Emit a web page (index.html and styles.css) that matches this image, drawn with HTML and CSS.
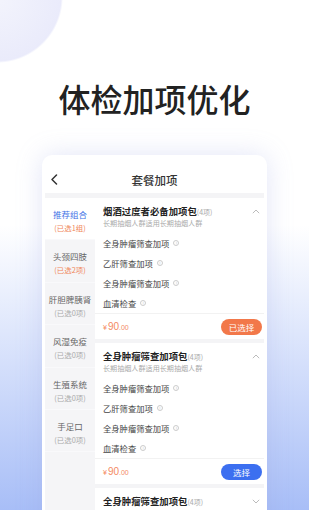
FILE: index.html
```html
<!DOCTYPE html>
<html lang="zh-CN">
<head>
<meta charset="utf-8">
<link rel="stylesheet" href="styles.css">
</head>
<body>
<div class="page">
  <h1 class="headline">体检加项优化</h1>
  <div class="card">
    <div class="topbar">
      <svg class="back" width="8" height="11" viewBox="0 0 8 11"><path d="M6.5 1 L2 5.5 L6.5 10" fill="none" stroke="#333" stroke-width="1.5" stroke-linecap="round" stroke-linejoin="round"/></svg>
      <div class="topbar-title">套餐加项</div>
    </div>
    <div class="band"></div>
    <div class="main">
      <div class="side">
        <div class="side-item active"><div class="side-name">推荐组合</div><div class="side-sub hot">(已选1组)</div></div>
        <div class="side-item"><div class="side-name">头颈四肢</div><div class="side-sub hot">(已选2项)</div></div>
        <div class="side-item"><div class="side-name">肝胆脾胰肾</div><div class="side-sub">(已选0项)</div></div>
        <div class="side-item"><div class="side-name">风湿免疫</div><div class="side-sub">(已选0项)</div></div>
        <div class="side-item"><div class="side-name">生殖系统</div><div class="side-sub">(已选0项)</div></div>
        <div class="side-item"><div class="side-name">手足口</div><div class="side-sub">(已选0项)</div></div>
      </div>
      <div class="content">
        <div class="pkg">
          <div class="pkg-head">
            <div class="pkg-title">烟酒过度者必备加项包<span class="pkg-count">(4项)</span></div>
            <svg class="chev" width="8" height="5" viewBox="0 0 8 5"><path d="M0.8 4.2 L4 1 L7.2 4.2" fill="none" stroke="#bbb" stroke-width="1"/></svg>
          </div>
          <div class="pkg-desc">长期抽烟人群适用长期抽烟人群</div>
          <ul class="items">
            <li>全身肿瘤筛查加项<span class="info">!</span></li>
            <li>乙肝筛查加项<span class="info">!</span></li>
            <li>全身肿瘤筛查加项<span class="info">!</span></li>
            <li>血清检查<span class="info">!</span></li>
          </ul>
          <div class="pkg-foot">
            <div class="price"><span class="cur">¥</span>90<span class="dec">.00</span></div>
            <div class="btn btn-selected">已选择</div>
          </div>
        </div>
        <div class="gap"></div>
        <div class="pkg">
          <div class="pkg-head">
            <div class="pkg-title">全身肿瘤筛查加项包<span class="pkg-count">(4项)</span></div>
            <svg class="chev" width="8" height="5" viewBox="0 0 8 5"><path d="M0.8 4.2 L4 1 L7.2 4.2" fill="none" stroke="#bbb" stroke-width="1"/></svg>
          </div>
          <div class="pkg-desc">长期抽烟人群适用长期抽烟人群</div>
          <ul class="items">
            <li>全身肿瘤筛查加项<span class="info">!</span></li>
            <li>乙肝筛查加项<span class="info">!</span></li>
            <li>全身肿瘤筛查加项<span class="info">!</span></li>
            <li>血清检查<span class="info">!</span></li>
          </ul>
          <div class="pkg-foot">
            <div class="price"><span class="cur">¥</span>90<span class="dec">.00</span></div>
            <div class="btn btn-select">选择</div>
          </div>
        </div>
        <div class="gap"></div>
        <div class="pkg">
          <div class="pkg-head">
            <div class="pkg-title">全身肿瘤筛查加项包<span class="pkg-count">(4项)</span></div>
            <svg class="chev" width="8" height="5" viewBox="0 0 8 5"><path d="M0.8 0.8 L4 4 L7.2 0.8" fill="none" stroke="#bbb" stroke-width="1"/></svg>
          </div>
        </div>
      </div>
    </div>
  </div>
</div>
</body>
</html>
```

FILE: styles.css
```css
* { box-sizing: border-box; }
html, body { margin: 0; padding: 0; }
body {
  font-family: "Noto Sans CJK SC", "Noto Sans", sans-serif;
  color: #333;
}
.page {
  width: 309px;
  height: 510px;
  overflow: hidden;
  background:
    radial-gradient(circle 66px at -3px -3px, #f3f4fc 0, #eaebfb 64px, rgba(234,235,251,0) 66px),
    linear-gradient(180deg, #ffffff 0, #ffffff 225px, #a8bef7 510px);
  padding-top: 82px;
}
.headline {
  margin: 0;
  font-size: 32px;
  line-height: 32px;
  font-weight: 500;
  color: #222;
  text-align: center;
  letter-spacing: 0;
}
.card {
  width: 225px;
  margin: 41px auto 0;
  background: #fff;
  border-radius: 10px 10px 0 0;
  padding: 0 3px;
  height: 400px;
  box-shadow: 0 0 26px rgba(150, 160, 225, 0.28);
}
.topbar {
  height: 38px;
  padding-top: 12px;
  display: flex;
  align-items: center;
  position: relative;
}
.topbar-title {
  flex: 1;
  text-align: center;
  font-size: 11.5px;
  line-height: 26px;
  font-weight: 500;
  color: #333;
}
.back {
  position: absolute;
  left: 5px;
  top: 19px;
}
.band { height: 5px; background: #f4f4f6; }
.main { display: flex; }
.side {
  width: 50px;
  background: #f5f5f7;
  height: 360px;
}
.side-item {
  height: 42.4px;
  padding-top: 10px;
  text-align: center;
  border-bottom: 1px solid #f9f9fb;
}
.side-item.active { background: #fff; }
.side-name {
  font-size: 8.5px;
  line-height: 13px;
  color: #666;
  white-space: nowrap;
}
.side-item.active .side-name { color: #3f72e6; }
.side-sub {
  font-size: 7.4px;
  line-height: 13px;
  color: #aaa;
  white-space: nowrap;
}
.side-sub.hot { color: #f0875a; }
.content {
  flex: 1;
  background: #fff;
}
.pkg {
  padding: 6px 2px 0 8px;
}
.pkg-head {
  display: flex;
  align-items: center;
  justify-content: space-between;
  height: 14px;
}
.pkg-title {
  font-size: 9.4px;
  line-height: 14px;
  font-weight: 700;
  color: #222;
  white-space: nowrap;
}
.pkg-count {
  font-size: 7px;
  font-weight: 400;
  color: #aaa;
}
.chev { margin-right: 2px; }
.pkg-desc {
  font-size: 7.1px;
  line-height: 10px;
  color: #aaa;
  white-space: nowrap;
}
.items {
  list-style: none;
  margin: 5px 0 0;
  padding: 0;
}
.items li {
  height: 20px;
  line-height: 20px;
  font-size: 8.3px;
  color: #444;
  display: flex;
  align-items: center;
}
.info {
  width: 6px;
  height: 6px;
  border: 0.8px solid #ccc;
  border-radius: 50%;
  margin-left: 4px;
  font-size: 4.5px;
  line-height: 5px;
  text-align: center;
  color: #ccc;
  font-family: "DejaVu Sans", sans-serif;
}
.pkg-foot {
  border-top: 1px solid #f2f2f2;
  margin-left: -8px;
  margin-right: -2px;
  padding: 0 2px 0 8px;
  height: 26px;
  display: flex;
  align-items: center;
  justify-content: space-between;
}
.price {
  color: #f48a63;
  font-size: 10px;
  font-family: "Liberation Sans", sans-serif;
}
.cur { font-size: 7px; margin-right: 1px; }
.dec { font-size: 7px; }
.btn {
  width: 41px;
  height: 16px;
  border-radius: 8px;
  color: #fff;
  font-size: 8.5px;
  line-height: 16px;
  text-align: center;
}
.btn-selected { background: #f2784a; }
.btn-select { background: #3c6ff0; }
.gap { height: 4px; background: #f4f4f6; }
```
